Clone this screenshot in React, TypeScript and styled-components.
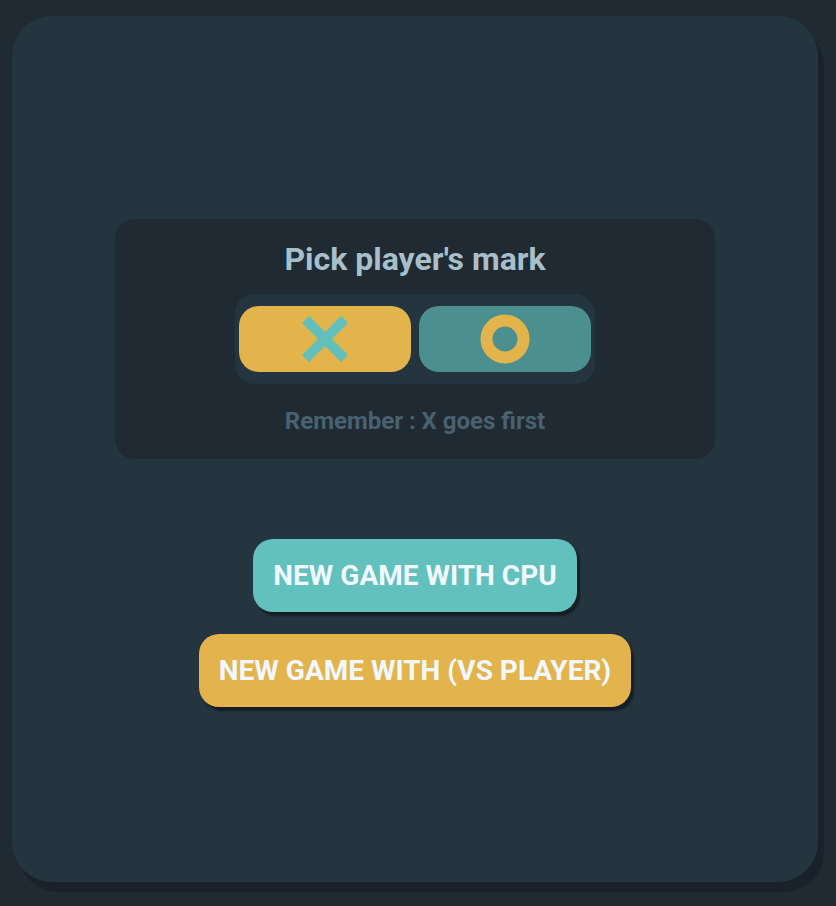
import React, { useState } from "react";
import styled, { createGlobalStyle } from "styled-components";

const GlobalStyle = createGlobalStyle`
  html, body { margin: 0; padding: 0; }
  body {
    background: #1f2a33;
    font-family: Roboto, "Liberation Sans", sans-serif;
  }
  * { box-sizing: border-box; }
`;

const Page = styled.div`
  padding: 16px 18px 24px 12px;
`;

const Card = styled.main`
  height: 866px;
  background: #253540;
  border-radius: 40px;
  box-shadow: 6px 10px 0 #19222a;
  display: flex;
  flex-direction: column;
  align-items: center;
  padding-top: 203px;
`;

const Panel = styled.section`
  width: 600px;
  height: 240px;
  background: #1f2a33;
  border-radius: 20px;
  display: flex;
  flex-direction: column;
  align-items: center;
  padding-top: 21px;
`;

const Title = styled.h1`
  margin: 0;
  font-size: 32px;
  line-height: 38px;
  font-weight: 700;
  color: #a8bfc9;
`;

const Toggle = styled.div`
  margin-top: 16px;
  background: #253540;
  border-radius: 20px;
  padding: 12px 4px;
  display: flex;
  gap: 8px;
`;

const MarkButton = styled.button<{ $active: boolean }>`
  width: 172px;
  height: 66px;
  border: none;
  border-radius: 20px;
  background: ${(p) => (p.$active ? "#e3b44c" : "#4b8f8e")};
  display: flex;
  align-items: center;
  justify-content: center;
  cursor: pointer;
  padding: 0;
`;

const Hint = styled.p`
  margin: 23px 0 0;
  font-size: 24px;
  line-height: 28px;
  font-weight: 700;
  color: #4a6170;
`;

const Actions = styled.div`
  margin-top: 80px;
  display: flex;
  flex-direction: column;
  align-items: center;
  gap: 22px;
`;

const ActionButton = styled.button<{ $color: string }>`
  height: 73px;
  padding: 0 20px;
  border: none;
  border-radius: 20px;
  background: ${(p) => p.$color};
  color: #f2f8ff;
  font-family: Roboto, "Liberation Sans", sans-serif;
  font-size: 28px;
  font-weight: 700;
  box-shadow: 3px 4px 2px #161e24;
  cursor: pointer;
`;

const XIcon = () => (
  <svg width="46" height="46" viewBox="0 0 46 46">
    <path d="M7 7 L39 39 M39 7 L7 39" stroke="#62c0bc" strokeWidth="10" strokeLinecap="square" />
  </svg>
);

const OIcon = () => (
  <svg width="50" height="50" viewBox="0 0 50 50">
    <circle cx="25" cy="25" r="18.5" fill="none" stroke="#e3b44c" strokeWidth="12" />
  </svg>
);

export default function App() {
  const [mark, setMark] = useState<"x" | "o">("x");
  return (
    <>
      <GlobalStyle />
      <Page>
        <Card>
          <Panel>
            <Title>Pick player's mark</Title>
            <Toggle>
              <MarkButton $active={mark === "x"} onClick={() => setMark("x")} aria-label="X">
                <XIcon />
              </MarkButton>
              <MarkButton $active={mark === "o"} onClick={() => setMark("o")} aria-label="O">
                <OIcon />
              </MarkButton>
            </Toggle>
            <Hint>Remember : X goes first</Hint>
          </Panel>
          <Actions>
            <ActionButton $color="#62c1bc">NEW GAME WITH CPU</ActionButton>
            <ActionButton $color="#e3b44c">NEW GAME WITH (VS PLAYER)</ActionButton>
          </Actions>
        </Card>
      </Page>
    </>
  );
}
